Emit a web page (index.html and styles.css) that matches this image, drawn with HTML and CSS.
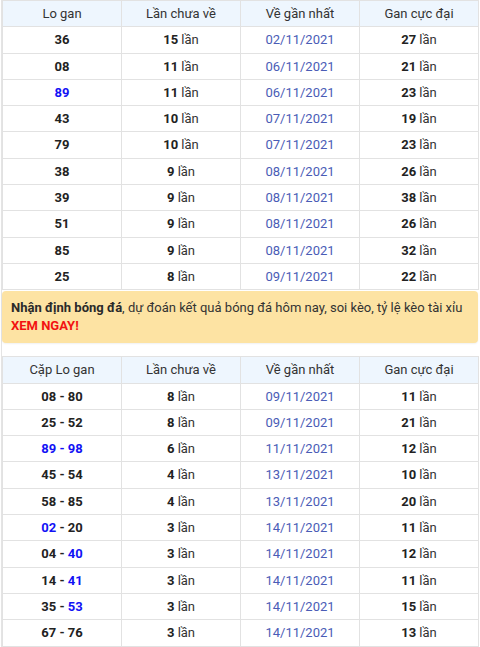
FILE: index.html
```html
<!DOCTYPE html>
<html lang="vi">
<head>
<meta charset="utf-8">
<link rel="stylesheet" href="styles.css">
</head>
<body>
<div class="wrap">
<table class="tbl">
  <thead>
    <tr><th>Lo gan</th><th>Lần chưa về</th><th>Về gần nhất</th><th>Gan cực đại</th></tr>
  </thead>
  <tbody>
    <tr><td><b>36</b></td><td><b>15</b> lần</td><td class="date">02/11/2021</td><td><b>27</b> lần</td></tr>
    <tr><td><b>08</b></td><td><b>11</b> lần</td><td class="date">06/11/2021</td><td><b>21</b> lần</td></tr>
    <tr><td><b class="blue">89</b></td><td><b>11</b> lần</td><td class="date">06/11/2021</td><td><b>23</b> lần</td></tr>
    <tr><td><b>43</b></td><td><b>10</b> lần</td><td class="date">07/11/2021</td><td><b>19</b> lần</td></tr>
    <tr><td><b>79</b></td><td><b>10</b> lần</td><td class="date">07/11/2021</td><td><b>23</b> lần</td></tr>
    <tr><td><b>38</b></td><td><b>9</b> lần</td><td class="date">08/11/2021</td><td><b>26</b> lần</td></tr>
    <tr><td><b>39</b></td><td><b>9</b> lần</td><td class="date">08/11/2021</td><td><b>38</b> lần</td></tr>
    <tr><td><b>51</b></td><td><b>9</b> lần</td><td class="date">08/11/2021</td><td><b>26</b> lần</td></tr>
    <tr><td><b>85</b></td><td><b>9</b> lần</td><td class="date">08/11/2021</td><td><b>32</b> lần</td></tr>
    <tr><td><b>25</b></td><td><b>8</b> lần</td><td class="date">09/11/2021</td><td><b>22</b> lần</td></tr>
  </tbody>
</table>
<div class="notice"><b>Nhận định bóng đá</b>, dự đoán kết quả bóng đá hôm nay, soi kèo, tỷ lệ kèo tài xỉu <b class="red">XEM NGAY!</b></div>
<table class="tbl">
  <thead>
    <tr><th>Cặp Lo gan</th><th>Lần chưa về</th><th>Về gần nhất</th><th>Gan cực đại</th></tr>
  </thead>
  <tbody>
    <tr><td><b>08 - 80</b></td><td><b>8</b> lần</td><td class="date">09/11/2021</td><td><b>11</b> lần</td></tr>
    <tr><td><b>25 - 52</b></td><td><b>8</b> lần</td><td class="date">09/11/2021</td><td><b>21</b> lần</td></tr>
    <tr><td><b class="blue">89 - 98</b></td><td><b>6</b> lần</td><td class="date">11/11/2021</td><td><b>12</b> lần</td></tr>
    <tr><td><b>45 - 54</b></td><td><b>4</b> lần</td><td class="date">13/11/2021</td><td><b>10</b> lần</td></tr>
    <tr><td><b>58 - 85</b></td><td><b>4</b> lần</td><td class="date">13/11/2021</td><td><b>20</b> lần</td></tr>
    <tr><td><b><span class="blue">02</span> - 20</b></td><td><b>3</b> lần</td><td class="date">14/11/2021</td><td><b>11</b> lần</td></tr>
    <tr><td><b>04 - <span class="blue">40</span></b></td><td><b>3</b> lần</td><td class="date">14/11/2021</td><td><b>12</b> lần</td></tr>
    <tr><td><b>14 - <span class="blue">41</span></b></td><td><b>3</b> lần</td><td class="date">14/11/2021</td><td><b>11</b> lần</td></tr>
    <tr><td><b>35 - <span class="blue">53</span></b></td><td><b>3</b> lần</td><td class="date">14/11/2021</td><td><b>15</b> lần</td></tr>
    <tr><td><b>67 - 76</b></td><td><b>3</b> lần</td><td class="date">14/11/2021</td><td><b>13</b> lần</td></tr>
  </tbody>
</table>
</div>
</body>
</html>
```
FILE: styles.css
```css
html, body {
  margin: 0;
  padding: 0;
  background: #fff;
}
body {
  font-family: Roboto, "Liberation Sans", sans-serif;
  font-size: 13px;
  color: #333;
}
.wrap {
  width: 478px;
  margin-left: 1px;
  border-left: 1px solid #e4e4e4;
  min-height: 647px;
  box-sizing: border-box;
}
.tbl {
  width: 477px;
  border-collapse: collapse;
  table-layout: fixed;
}
.tbl th, .tbl td {
  border: 1px solid #e2e2e2;
  text-align: center;
  padding: 5px 4px;
  line-height: 15.3px;
}
.tbl th {
  background: #eef6fe;
  font-weight: normal;
  color: #333;
  padding-top: 5px;
  padding-bottom: 5px;
}
.tbl td b {
  color: #222;
}
.tbl td .blue, .tbl td b.blue {
  color: #1212f5;
}
.tbl td.date {
  color: #4a5cb6;
}
.notice {
  margin: 1px 1px 13px 0;
  background: #fde3a3;
  border-radius: 4px;
  padding: 8px 9px 8px 9px;
  line-height: 18px;
  color: #333;
  box-shadow: 0 1px 2px rgba(0,0,0,0.06);
}
.notice b {
  color: #2a2a2a;
}
.notice b.red {
  color: #f21212;
}
```
